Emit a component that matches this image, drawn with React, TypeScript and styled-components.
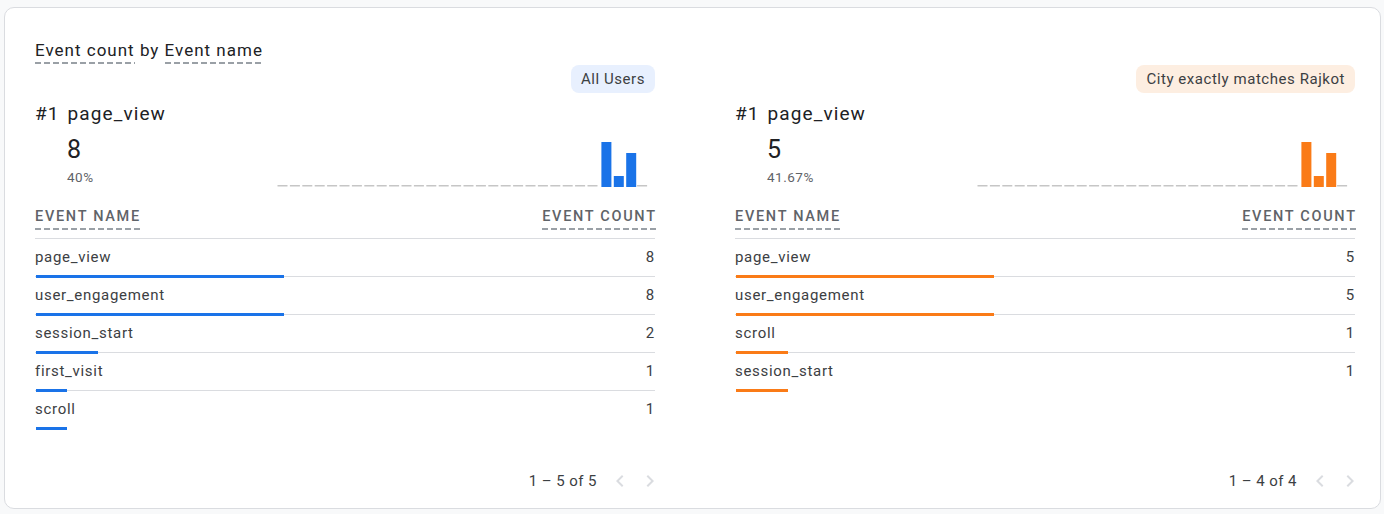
import React from "react";
import styled, { createGlobalStyle } from "styled-components";

const GlobalStyle = createGlobalStyle`
  html, body { margin: 0; padding: 0; background: #f8f9fa; }
  body { font-family: Roboto, "Noto Sans", Arial, sans-serif; color: #202124; }
  * { box-sizing: border-box; }
`;

const Page = styled.div`
  padding: 7px 3px 0 4px;
`;

const Card = styled.section`
  background: #fff;
  border: 1px solid #dadce0;
  border-radius: 10px;
  padding: 30px 25px 17px 30px;
  height: 502px;
  display: flex;
  flex-direction: column;
`;

const Title = styled.h2`
  margin: 0;
  font-size: 17px;
  letter-spacing: 1px;
  font-weight: 400;
  line-height: 24px;
  color: #202124;
  height: 27px;
`;

const Dashed = styled.span`
  padding-bottom: 4px;
  background-image: linear-gradient(to right, #9aa0a6 0 6px, transparent 6px 9px);
  background-size: 9px 2px;
  background-repeat: repeat-x;
  background-position: 0 100%;
`;

const Panels = styled.div`
  flex: 1;
  display: grid;
  grid-template-columns: 620px 620px;
  column-gap: 80px;
`;

const Panel = styled.div`
  display: flex;
  flex-direction: column;
`;

const BadgeRow = styled.div`
  display: flex;
  justify-content: flex-end;
`;

const Badge = styled.span<{ $tone: "blue" | "orange" }>`
  height: 28px;
  line-height: 28px;
  padding: 0 10px;
  border-radius: 8px;
  font-size: 15px;
  letter-spacing: 0.55px;
  color: #3c4043;
  background: ${(p) => (p.$tone === "blue" ? "#e8f0fe" : "#fdeee1")};
`;

const TopItem = styled.div`
  margin-top: 9px;
  display: flex;
  gap: 8px;
  font-size: 19px;
  letter-spacing: 1.1px;
  line-height: 24px;
  color: #202124;
`;

const Summary = styled.div`
  display: flex;
  align-items: flex-end;
  height: 61px;
`;

const ValueBlock = styled.div`
  padding-left: 32px;
  padding-bottom: 2px;
  display: flex;
  flex-direction: column;
`;

const BigValue = styled.div`
  font-size: 25px;
  line-height: 28px;
  color: #202124;
`;

const Pct = styled.div`
  margin-top: 5px;
  font-size: 13.5px;
  letter-spacing: 0.5px;
  line-height: 16px;
  color: #5f6368;
`;

const Spark = styled.svg`
  display: block;
  margin-left: auto;
  margin-right: 4px;
`;

const HeaderRow = styled.div`
  margin-top: 20px;
  height: 32px;
  display: flex;
  justify-content: space-between;
  align-items: flex-start;
  border-bottom: 1px solid #dadce0;
  padding-top: 2px;
`;

const HeaderCell = styled.span`
  font-size: 14.5px;
  line-height: 16px;
  font-weight: 500;
  text-transform: uppercase;
  letter-spacing: 1.7px;
  margin-right: -1.7px;
  color: #5f6368;
  padding-bottom: 5px;
  background-image: linear-gradient(to right, #9aa0a6 0 6px, transparent 6px 9px);
  background-size: 9px 2px;
  background-repeat: repeat-x;
  background-position: 0 100%;
`;

const Rows = styled.div`
  flex: 1;
`;

const Row = styled.div<{ $last: boolean }>`
  position: relative;
  height: 38px;
  display: flex;
  justify-content: space-between;
  align-items: center;
  padding-bottom: 1px;
  border-bottom: 1px solid ${(p) => (p.$last ? "transparent" : "#dadce0")};
  font-size: 15px;
  letter-spacing: 0.7px;
  color: #3c4043;
`;

const Bar = styled.div<{ $color: string }>`
  position: absolute;
  left: 1px;
  bottom: -2px;
  height: 3px;
  background: ${(p) => p.$color};
`;

const Pagination = styled.div`
  margin-top: 41px;
  margin-right: -10px;
  display: flex;
  justify-content: flex-end;
  align-items: center;
  height: 20px;
`;

const PageText = styled.span`
  font-size: 15px;
  letter-spacing: 0.45px;
  color: #3c4043;
  margin-right: 8px;
`;

const PageButton = styled.button`
  width: 30px;
  height: 24px;
  padding: 0;
  border: 0;
  background: none;
  display: flex;
  align-items: center;
  justify-content: center;
`;

const Chevron = ({ dir }: { dir: "left" | "right" }) => (
  <svg width="24" height="24" viewBox="0 0 24 24">
    <path
      fill="#dadce0"
      d={
        dir === "left"
          ? "M15.41 7.41L14 6l-6 6 6 6 1.41-1.41L10.83 12z"
          : "M8.59 16.59L10 18l6-6-6-6-1.41 1.41L13.17 12z"
      }
    />
  </svg>
);

const Sparkline = ({ color }: { color: string }) => {
  const slots = 30;
  const step = 12.4;
  const bars: Record<number, number> = { 26: 45, 27: 11, 28: 34 };
  const w = 374;
  const h = 47;
  return (
    <Spark width={w} height={h} viewBox={`0 0 ${w} ${h}`}>
      {Array.from({ length: slots }).map((_, i) => {
        const x = i * step + 0.5;
        const v = bars[i];
        return v ? (
          <rect key={i} x={x + 1.5} y={h - v} width={10} height={v} fill={color} />
        ) : (
          <rect key={i} x={x} y={h - 2} width={10} height={1.5} fill="#c6c6c6" />
        );
      })}
    </Spark>
  );
};

type Item = { name: string; count: number };

const panels: {
  badge: string;
  tone: "blue" | "orange";
  color: string;
  value: number;
  pct: string;
  total: number;
  items: Item[];
  range: string;
}[] = [
  {
    badge: "All Users",
    tone: "blue",
    color: "#1a73e8",
    value: 8,
    pct: "40%",
    total: 20,
    items: [
      { name: "page_view", count: 8 },
      { name: "user_engagement", count: 8 },
      { name: "session_start", count: 2 },
      { name: "first_visit", count: 1 },
      { name: "scroll", count: 1 },
    ],
    range: "1 – 5 of 5",
  },
  {
    badge: "City exactly matches Rajkot",
    tone: "orange",
    color: "#fa7b17",
    value: 5,
    pct: "41.67%",
    total: 12,
    items: [
      { name: "page_view", count: 5 },
      { name: "user_engagement", count: 5 },
      { name: "scroll", count: 1 },
      { name: "session_start", count: 1 },
    ],
    range: "1 – 4 of 4",
  },
];

export default function App() {
  return (
    <Page>
      <GlobalStyle />
      <Card>
        <Title>
          <Dashed>Event count</Dashed> by <Dashed>Event name</Dashed>
        </Title>
        <Panels>
          {panels.map((p) => (
            <Panel key={p.badge}>
              <BadgeRow>
                <Badge $tone={p.tone}>{p.badge}</Badge>
              </BadgeRow>
              <TopItem>
                <span>#1</span>
                <span>page_view</span>
              </TopItem>
              <Summary>
                <ValueBlock>
                  <BigValue>{p.value}</BigValue>
                  <Pct>{p.pct}</Pct>
                </ValueBlock>
                <Sparkline color={p.color} />
              </Summary>
              <HeaderRow>
                <HeaderCell>Event name</HeaderCell>
                <HeaderCell>Event count</HeaderCell>
              </HeaderRow>
              <Rows>
                {p.items.map((it, i) => (
                  <Row key={it.name} $last={i === p.items.length - 1}>
                    <span>{it.name}</span>
                    <span>{it.count}</span>
                    <Bar $color={p.color} style={{ width: `${(it.count / p.total) * 620}px` }} />
                  </Row>
                ))}
              </Rows>
              <Pagination>
                <PageText>{p.range}</PageText>
                <PageButton aria-label="Previous">
                  <Chevron dir="left" />
                </PageButton>
                <PageButton aria-label="Next">
                  <Chevron dir="right" />
                </PageButton>
              </Pagination>
            </Panel>
          ))}
        </Panels>
      </Card>
    </Page>
  );
}
